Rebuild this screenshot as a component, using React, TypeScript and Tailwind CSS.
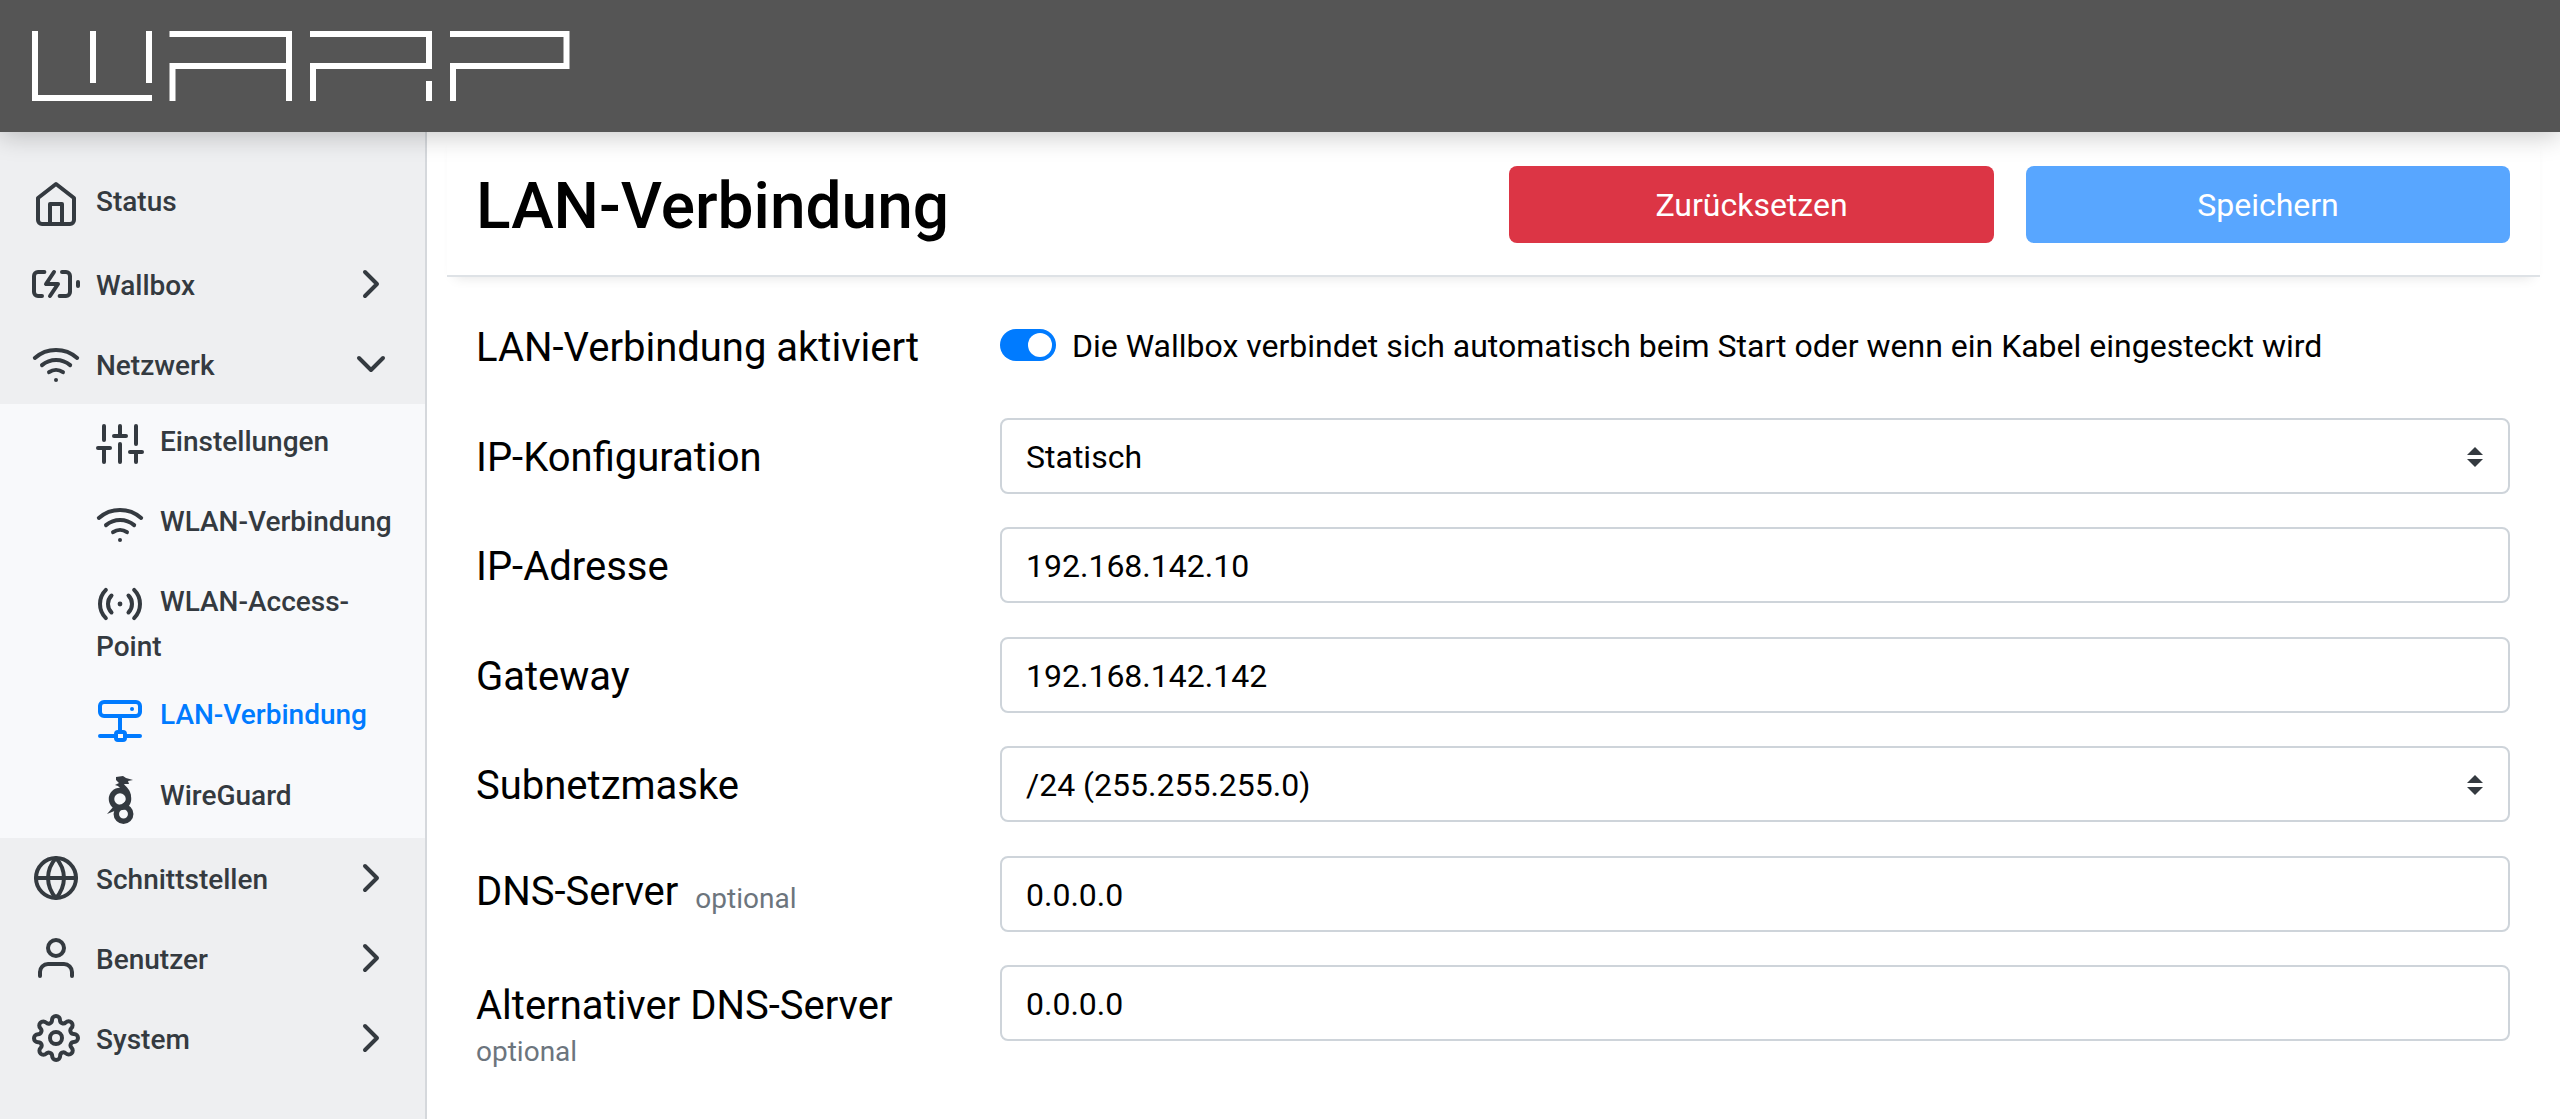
import { FiBatteryCharging, FiChevronDown, FiChevronRight, FiGlobe, FiHome, FiSettings, FiSliders, FiUser, FiWifi } from 'react-icons/fi';
import type { ReactNode } from 'react';

const NavIcon = 'w-12 h-12 shrink-0 mr-4';
const SubIconClass = 'inline-block w-12 h-12 -my-2 mr-4 align-middle';

const Logo = () => (
  <svg width="538" height="70" viewBox="0 0 538 70" fill="#fff" className="block">
    <path d="M0 0h6v64h114v6H0z" />
    <path d="M58 0h6v52h-6zM114 0h6v52h-6z" />
    <path d="M137.500 0H260v70h-6V38H143.500v32h-6V32H254V6H137.500z" />
    <path d="M278 0h122v38H284v32h-6V32h116V6H278z" />
    <path d="M394 50h6v20h-6z" />
    <path d="M418 0h119.500v38H424v32h-6V32h113.500V6H418z" />
  </svg>
);

// feather radio, with the smaller centre dot of the original
const RadioIcon = () => (
  <svg viewBox="0 0 24 24" fill="none" stroke="currentColor" strokeWidth="2" strokeLinecap="round" strokeLinejoin="round" className={SubIconClass}>
    <circle cx="12" cy="12" r="1.200" fill="currentColor" stroke="none" />
    <path d="M16.240 7.760a6 6 0 0 1 0 8.490m-8.480-.01a6 6 0 0 1 0-8.490m11.310-2.820a10 10 0 0 1 0 14.140m-14.140 0a10 10 0 0 1 0-14.140" />
  </svg>
);

const LanIcon = () => (
  <svg viewBox="0 -2 24 24" fill="none" stroke="currentColor" strokeWidth="2" strokeLinecap="round" strokeLinejoin="round" className={`${SubIconClass} overflow-visible`}>
    <rect x="2" y="2.500" width="20" height="7" rx="2" />
    <path d="M18 6h.01M12 9.500v7.500M2 19.500h8M14.500 19.500h7.500" />
    <rect x="10" y="17.500" width="4.500" height="4" rx="1" />
  </svg>
);

const WireGuardIcon = () => (
  <svg viewBox="0 -2 48 48" fill="none" stroke="currentColor" className={`${SubIconClass} overflow-visible`}>
    <circle cx="24" cy="23" r="8.500" strokeWidth="5.500" />
    <circle cx="27.500" cy="38" r="7.200" strokeWidth="5.500" />
    <path d="M20 1l7-1 3 2 7 2-5 1 1 3-5 0c2 3 7 6 7 13 0 5-3 8-7 10l-2-3c3-2 5-4 5-7 0-5-6-8-9-11l-3-1 4-2-3-3z" fill="currentColor" stroke="none" />
    <path d="M11 38l7-8 3 4z" fill="currentColor" stroke="none" />
  </svg>
);

const NavRow = ({ icon, label, open, chevron = true, className }: { icon: ReactNode; label: string; open?: boolean; chevron?: boolean; className: string }) => (
  <div className={`flex items-center pl-8 pr-[30px] ${className}`}>
    {icon}
    <span className="flex-1 pt-1">{label}</span>
    {chevron && (open ? <FiChevronDown className="w-12 h-12" /> : <FiChevronRight className="w-12 h-12" />)}
  </div>
);

const SubRow = ({ children, className }: { children: ReactNode; className?: string }) => (
  <div className={`pl-24 pr-6 ${className ?? ''}`}>{children}</div>
);

const Chevrons = () => (
  <svg width="16" height="20" viewBox="0 0 16 20" className="absolute right-[25px] top-[27px]" fill="#343a40">
    <path d="M8 0l8 8H0zM8 20L0 12h16z" />
  </svg>
);

const Field = ({ value, select }: { value: string; select?: boolean }) => (
  <div className="relative flex-1 h-[76px] border-2 border-[#ced4da] rounded-lg flex items-center pl-[24px] pt-[2px] text-[32px]">
    {value}
    {select && <Chevrons />}
  </div>
);

const FormRow = ({ label, hint, stacked, children }: { label: string; hint?: boolean; stacked?: boolean; children: ReactNode }) => (
  <div className="flex mb-[33.400px]">
    <div className={`w-[524px] shrink-0 -ml-px flex flex-col ${stacked ? '' : 'justify-center pt-1 h-[76px]'}`}>
      {stacked ? (
        <div className="pt-[17px]">
          <div className="text-[40px] leading-[48px]">{label}</div>
          <div className="text-[28px] leading-[44px] text-[#6c757d]">optional</div>
        </div>
      ) : (
        <div className="text-[40px] leading-[48px]">
          {label}
          {hint && <span className="ml-[17px] text-[28px] text-[#6c757d] align-[-3px]">optional</span>}
        </div>
      )}
    </div>
    {children}
  </div>
);

export default function App() {
  return (
    <div className="h-[1119px] w-[2560px] overflow-hidden flex flex-col bg-white font-['Roboto',sans-serif]">
      <header className="relative z-10 h-[132px] shrink-0 bg-[#555555] pl-8 pt-[31px] shadow-[0_4px_24px_rgba(0,0,0,0.22)]">
        <Logo />
      </header>
      <div className="flex flex-1 min-h-0">
        <aside className="w-[427px] shrink-0 bg-[#eeeff1] border-r-2 border-[#d5d8dc] pt-[25px] font-medium text-[28px] text-[#343a40]">
          <NavRow icon={<FiHome className={`${NavIcon} mt-[9px]`} />} label="Status" chevron={false} className="h-[85px] mb-[2px]" />
          <NavRow icon={<FiBatteryCharging className={NavIcon} />} label="Wallbox" className="h-[80px]" />
          <NavRow icon={<FiWifi className={NavIcon} />} label="Netzwerk" open className="h-[80px]" />
          <div className="bg-[#f8f9fb] h-[434px] pt-[15px] leading-[45px]">
            <SubRow className="h-[80px]"><FiSliders className={SubIconClass} />Einstellungen</SubRow>
            <SubRow className="h-[80px]"><FiWifi className={SubIconClass} />WLAN-Verbindung</SubRow>
            <SubRow className="h-[113px]"><RadioIcon />WLAN-Access-Point</SubRow>
            <SubRow className="h-[81px] text-[#007bff]"><LanIcon />LAN-Verbindung</SubRow>
            <SubRow className="h-[64px]"><WireGuardIcon />WireGuard</SubRow>
          </div>
          <NavRow icon={<FiGlobe className={NavIcon} />} label="Schnittstellen" className="h-[80px]" />
          <NavRow icon={<FiUser className={NavIcon} />} label="Benutzer" className="h-[80px]" />
          <NavRow icon={<FiSettings className={NavIcon} />} label="System" className="h-[80px]" />
        </aside>
        <main className="flex-1 min-w-0 px-5">
          <div className="h-[145px] flex items-start justify-between px-[30px] pt-[34px] border-b-2 border-[#dee2e6] shadow-[0_8px_12px_-8px_rgba(0,0,0,0.12)]">
            <h1 className="text-[64px] leading-[77px] font-medium text-black -ml-px pt-[2px]">LAN-Verbindung</h1>
            <div className="flex gap-8">
              <button className="w-[485px] h-[77px] rounded-lg bg-[#dc3545] text-white text-[32px]">Zurücksetzen</button>
              <button className="w-[484px] h-[77px] rounded-lg bg-[#58a6ff] text-white text-[32px]">Speichern</button>
            </div>
          </div>
          <div className="px-[30px] pt-[44px] text-black">
            <div className="flex items-center h-[48px] mb-[49px]">
              <div className="w-[524px] shrink-0 -ml-px mt-[6px] text-[40px] leading-[48px]">LAN-Verbindung aktiviert</div>
              <div className="w-14 h-8 rounded-full bg-[#007bff] flex justify-end items-center pr-1 mr-4">
                <div className="w-6 h-6 rounded-full bg-white" />
              </div>
              <div className="text-[32px] mt-[2px]">Die Wallbox verbindet sich automatisch beim Start oder wenn ein Kabel eingesteckt wird</div>
            </div>
            <FormRow label="IP-Konfiguration"><Field value="Statisch" select /></FormRow>
            <FormRow label="IP-Adresse"><Field value="192.168.142.10" /></FormRow>
            <FormRow label="Gateway"><Field value="192.168.142.142" /></FormRow>
            <FormRow label="Subnetzmaske"><Field value="/24 (255.255.255.0)" select /></FormRow>
            <FormRow label="DNS-Server" hint><Field value="0.0.0.0" /></FormRow>
            <FormRow label="Alternativer DNS-Server" stacked><Field value="0.0.0.0" /></FormRow>
          </div>
        </main>
      </div>
    </div>
  );
}
